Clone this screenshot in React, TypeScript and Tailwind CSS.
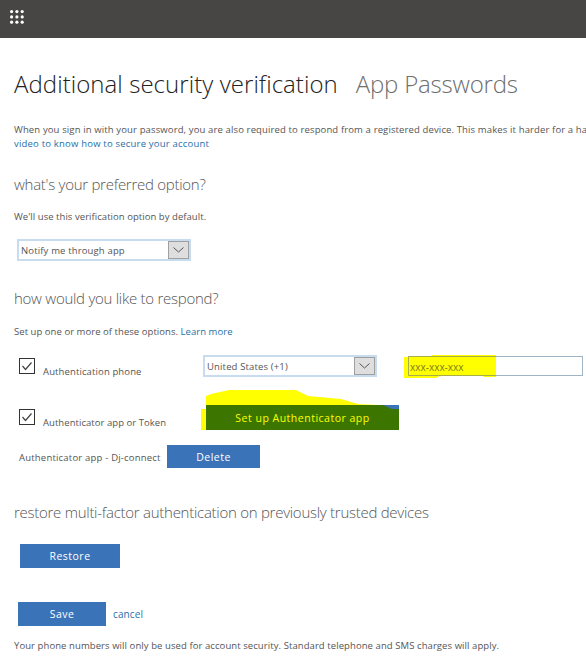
const font = "font-['Open_Sans','Liberation_Sans',sans-serif]";

function Waffle() {
  const pos = [1.6, 6.9, 12.2];
  return (
    <svg width="14" height="14" viewBox="0 0 14 14" className="block">
      {pos.flatMap((y) =>
        pos.map((x) => <circle key={`${x}-${y}`} cx={x} cy={y} r="1.6" fill="#ffffff" />)
      )}
    </svg>
  );
}

function Chevron() {
  return (
    <svg width="11" height="6" viewBox="0 0 11 6" fill="none" stroke="#555555" strokeWidth="1">
      <path d="M0.5 0.5L5.5 5L10.5 0.5" />
    </svg>
  );
}

function Select({ label, className }: { label: string; className: string }) {
  return (
    <div className={`flex h-[22px] items-stretch border-2 border-[#c7dcee] bg-white ${className}`}>
      <span className="flex-1 pl-[2px] text-[9.5px] leading-[19px] tracking-[0.15px] text-[#555555]">{label}</span>
      <span className="flex w-[21px] items-center justify-center border border-[#a0a0a0] bg-[#dedede]">
        <Chevron />
      </span>
    </div>
  );
}

function Check({ className }: { className: string }) {
  return (
    <span className={`flex h-[16px] w-[16px] shrink-0 items-center justify-center border border-[#333333] bg-white ${className}`}>
      <svg width="12" height="10" viewBox="0 0 12 10" fill="none" stroke="#444444" strokeWidth="1.2">
        <path d="M1.5 5L4.5 8.5L10.5 1.5" />
      </svg>
    </span>
  );
}

function Heading({ children, className = "" }: { children: string; className?: string }) {
  return (
    <h2 className={`text-[15px] leading-[22px] font-light tracking-[-0.27px] text-[#555555] ${className}`}>{children}</h2>
  );
}

function Btn({ children, className }: { children: string; className: string }) {
  return (
    <button className={`block bg-[#3b73b9] pt-[2px] text-[10.5px] tracking-[0.5px] text-white ${className}`}>{children}</button>
  );
}

export default function App() {
  return (
    <div className={`h-[671px] w-[586px] overflow-hidden bg-white ${font}`}>
      <header className="flex h-[38px] items-start bg-[#474645] pt-[10px] pl-[10px]">
        <Waffle />
      </header>
      <main className="pl-[14px]">
        <div className="mt-[29px] flex items-baseline whitespace-nowrap text-[24px] leading-[34px] font-light">
          <h1 className="tracking-[0.06px] text-[#222222]">Additional security verification</h1>
          <span className="ml-[18px] tracking-[-0.2px] text-[#6e6e6e]">App Passwords</span>
        </div>
        <div className="mt-[22px] w-[572px] overflow-hidden">
          <p className="w-[800px] text-[9.5px] leading-[14px] tracking-[0.13px] text-[#555555]">
            When you sign in with your password, you are also required to respond from a registered device. This makes it harder for a hacker
            <br />
            <span className="tracking-[0.2px] text-[#1f6fa8]">video to know how to secure your account</span>
          </p>
        </div>
        <Heading className="mt-[22px]">what's your preferred option?</Heading>
        <p className="mt-[15px] text-[9.5px] leading-[14px] tracking-[0.05px] text-[#555555]">We'll use this verification option by default.</p>
        <Select label="Notify me through app" className="mt-[15px] ml-[3px] w-[174px]" />
        <Heading className="mt-[26px]">how would you like to respond?</Heading>
        <p className="mt-[16px] text-[9.5px] leading-[14px] tracking-[0.05px] text-[#555555]">
          Set up one or more of these options. <span className="text-[#1f6fa8]">Learn more</span>
        </p>
        <div className="mt-[16px] flex items-start">
          <div className="ml-[5px] flex w-[184px] items-end gap-[8px]">
            <Check className="mt-[3px]" />
            <span className="-mb-[4px] text-[9.5px] leading-[12px] tracking-[0.12px] text-[#555555]">Authentication phone</span>
          </div>
          <Select label="United States (+1)" className="w-[174px]" />
          <div className="relative mt-[1px] ml-[31px] h-[20px] w-[175px] border border-[#9fb4c4] bg-white">
            <svg width="92" height="24" viewBox="0 0 92 24" className="absolute -left-[5px] -top-[3px]">
              <path d="M0 3H28V1H92V23H80L78 21H44L36 22L32 24H0Z" fill="#ffff00" />
              <path d="M92 2.5H4.5V21.5H92" fill="none" stroke="#a8ae4a" strokeWidth="1" />
            </svg>
            <span className="absolute left-[1px] top-[3px] text-[10px] leading-[14px] text-[#7d7d20]">xxx-xxx-xxx</span>
          </div>
        </div>
        <div className="mt-[28px] flex items-start">
          <div className="ml-[5px] flex w-[187px] items-end gap-[8px]">
            <Check className="mt-[4px]" />
            <span className="-mb-[4px] whitespace-nowrap text-[9.5px] leading-[12px] tracking-[0.05px] text-[#555555]">Authenticator app or Token</span>
          </div>
          <div className="relative h-[25px] w-[193px]">
            <svg width="198" height="41" viewBox="0 0 198 41" className="absolute -left-[5px] -top-[15px]">
              <path d="M5 16V6L10 4L28 0H95L107 6L140 9L157 14L177 15H198V40H0V19H5Z" fill="#ffff00" />
            </svg>
            <button className="absolute inset-0 bg-[#3c7600] pt-[2px] text-[10.5px] tracking-[0.5px] text-[#ffff00]">Set up Authenticator app</button>
            <svg width="16" height="4" viewBox="0 0 16 4" className="absolute right-0 top-0">
              <path d="M0 0H16V4H9Z" fill="#3b73b9" />
            </svg>
          </div>
        </div>
        <div className="mt-[15px] flex items-center">
          <span className="ml-[5px] w-[148px] whitespace-nowrap pt-[3px] text-[9.5px] tracking-[0.2px] text-[#555555]">Authenticator app - Dj-connect</span>
          <Btn className="h-[23px] w-[93px]">Delete</Btn>
        </div>
        <Heading className="mt-[33px]">restore multi-factor authentication on previously trusted devices</Heading>
        <Btn className="mt-[21px] ml-[6px] h-[24px] w-[100px]">Restore</Btn>
        <div className="mt-[34px] flex items-center">
          <Btn className="ml-[4px] h-[24px] w-[88px]">Save</Btn>
          <span className="ml-[7px] pt-[1px] text-[10px] tracking-[0.1px] text-[#1f6fa8]">cancel</span>
        </div>
        <p className="mt-[13px] text-[9.5px] leading-[14px] tracking-[0.08px] text-[#555555]">
          Your phone numbers will only be used for account security. Standard telephone and SMS charges will apply.
        </p>
      </main>
    </div>
  );
}
